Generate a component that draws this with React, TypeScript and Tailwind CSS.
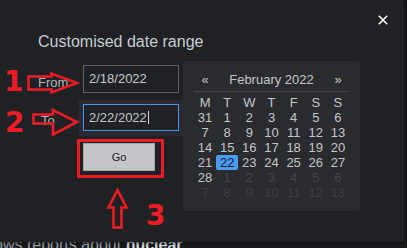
import React from "react";

type Day = { d: number; tone: "normal" | "dim" | "dimmer" | "sel" };

const rows: Day[][] = [
  [31, 1, 2, 3, 4, 5, 6].map((d) => ({ d, tone: "normal" as const })),
  [7, 8, 9, 10, 11, 12, 13].map((d) => ({ d, tone: "normal" as const })),
  [14, 15, 16, 17, 18, 19, 20].map((d) => ({ d, tone: "normal" as const })),
  [21, 22, 23, 24, 25, 26, 27].map((d) => ({ d, tone: d === 22 ? ("sel" as const) : ("normal" as const) })),
  [28, 1, 2, 3, 4, 5, 6].map((d, i) => ({ d, tone: i === 0 ? ("normal" as const) : ("dim" as const) })),
  [7, 8, 9, 10, 11, 12, 13].map((d) => ({ d, tone: "dimmer" as const })),
];

const toneClass: Record<Day["tone"], string> = {
  normal: "text-[#c3c6cb]",
  dim: "text-[#45464a]",
  dimmer: "text-[#3c3d41]",
  sel: "bg-[#4a9cf6] text-[#16181b] rounded-[2px]",
};

export default function App() {
  return (
    <div className="relative w-[407px] h-[248px] overflow-hidden bg-[#18191b] font-['Liberation_Sans',Arial,sans-serif]">
      {/* page text behind the dialog */}
      <div className="absolute left-[-6px] top-[236px] whitespace-nowrap text-[16px] leading-[18px] text-[#9ea2a8]">
        ows reports about <span className="font-bold text-[#d3d6da]">nuclear</span>
      </div>

      {/* dialog */}
      <div className="relative z-10 w-[404px] h-[242px] bg-[#202124] pl-[38px] pt-[33px] shadow-[0_1px_3px_rgba(0,0,0,0.6)]">
        <button className="absolute left-[378px] top-[15px] w-[10px] h-[10px]">
          <svg width="10" height="10" viewBox="0 0 10 10">
            <path d="M0.8 0.8 L9.2 9.2 M9.2 0.8 L0.8 9.2" stroke="#ffffff" strokeWidth="1.6" />
          </svg>
        </button>

        <div className="text-[16px] leading-[18px] text-[#c9ccd1]">Customised date range</div>

        <div className="flex mt-[10px]">
          {/* left column */}
          <div className="flex flex-col w-[145px] pt-[4px]">
            <div className="flex h-[28px]">
              <div className="w-[45px] pt-[10px] text-[13px] leading-[15px] text-[#b3b6bb]">From</div>
              <div className="w-[96px] h-[28px] border border-[#5f6266] pl-[5px] text-[13px] leading-[26px] text-[#c5c8cc]">
                2/18/2022
              </div>
            </div>

            <div className="flex mt-[7px]">
              <div className="w-[41px] pt-[13px] pl-[3px] text-[13px] leading-[15px] text-[#b3b6bb]">To</div>
              <div className="w-[104px] h-[36px] bg-[#2a2b2e] pt-[4px] pl-[4px]">
                <div className="flex items-center w-[96px] h-[27px] border border-[#4d8ff5] bg-[#212225] pl-[5px] text-[13px] leading-[25px] text-[#c5c8cc]">
                  <span>2/22/2022</span>
                  <span className="ml-[1px] w-[1px] h-[13px] bg-[#d0d3d8]" />
                </div>
              </div>
            </div>

            <div className="ml-[45px] mt-[7px] flex items-center justify-center w-[72px] h-[28px] border border-[#a3a5a9] bg-[#c3c5c9] text-[11px] text-[#1f2023]">
              Go
            </div>
          </div>

          {/* calendar popup */}
          <div className="w-[177px] h-[150px] bg-[#2a2b2e] rounded-[2px] px-[11px] pt-[11px]">
            <div className="flex h-[20px] border-b border-[#45464a] text-[13px] leading-[15px] text-[#c3c6cb]">
              <div className="w-[22px] text-center">«</div>
              <div className="flex-1 text-center">February 2022</div>
              <div className="w-[22px] text-center">»</div>
            </div>
            <div className="grid grid-cols-7 pt-[3px] text-[13px] leading-[15px] text-center">
              {["M", "T", "W", "T", "F", "S", "S"].map((n, i) => (
                <div key={"h" + i} className="text-[#c3c6cb]">
                  {n}
                </div>
              ))}
              {rows.map((r, ri) =>
                r.map((c, ci) => (
                  <div key={ri + "-" + ci} className={toneClass[c.tone]}>
                    {c.d}
                  </div>
                ))
              )}
            </div>
          </div>
        </div>
      </div>

      {/* red annotations */}
      <svg className="absolute left-0 top-0 z-20" width="407" height="248" viewBox="0 0 407 248">
        <polygon
          points="28.5,76.5 51.5,76.5 51.5,73.5 77,83 51.5,92.5 51.5,89.5 28.5,89.5"
          fill="none"
          stroke="#ed1c24"
          strokeWidth="2.6"
        />
        <polygon
          points="33.5,114.5 53,114.5 53,110 77,122 53,134.5 53,123.5 33.5,123.5"
          fill="none"
          stroke="#ed1c24"
          strokeWidth="2.6"
        />
        <polygon
          points="117.5,190 126.5,207.5 121.5,207.5 121.5,227.5 113.5,227.5 113.5,207.5 108.5,207.5"
          fill="none"
          stroke="#ed1c24"
          strokeWidth="2.6"
        />
        <rect x="78.5" y="140.5" width="84" height="36" fill="none" stroke="#ed1c24" strokeWidth="3" />
      </svg>
      <span className="absolute z-20 left-[4px] top-[68px] text-[28px] leading-[28px] font-bold text-[#ed1c24] font-['DejaVu_Sans',sans-serif]">
        1
      </span>
      <span className="absolute z-20 left-[5px] top-[109px] text-[28px] leading-[28px] font-bold text-[#ed1c24] font-['DejaVu_Sans',sans-serif]">
        2
      </span>
      <span className="absolute z-20 left-[146px] top-[202px] text-[28px] leading-[28px] font-bold text-[#ed1c24] font-['DejaVu_Sans',sans-serif]">
        3
      </span>
    </div>
  );
}
